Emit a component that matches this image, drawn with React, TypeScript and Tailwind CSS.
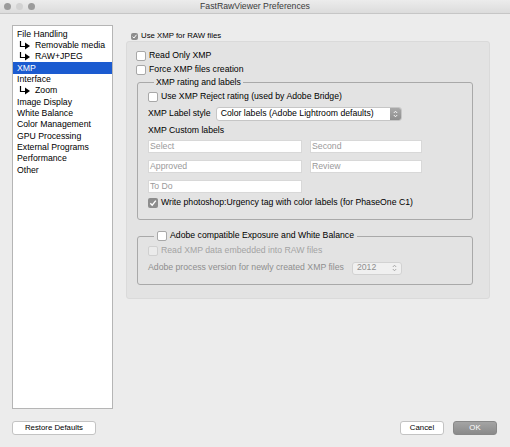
import React from 'react';

const font = { fontFamily: '"Liberation Sans", Arial, sans-serif' };

const NAV = [
  { label: 'File Handling' },
  { label: 'Removable media', sub: true },
  { label: 'RAW+JPEG', sub: true },
  { label: 'XMP', active: true },
  { label: 'Interface' },
  { label: 'Zoom', sub: true },
  { label: 'Image Display' },
  { label: 'White Balance' },
  { label: 'Color Management' },
  { label: 'GPU Processing' },
  { label: 'External Programs' },
  { label: 'Performance' },
  { label: 'Other' },
];

function SubArrow() {
  return (
    <svg width="13" height="9" viewBox="0 0 13 9" className="shrink-0">
      <path d="M1.5 0 V5.5 H6" stroke="#000" strokeWidth="1.2" fill="none" />
      <path d="M6 1.5 L11 5 L6 8.5 Z" fill="#000" />
    </svg>
  );
}

function Check({ checked, disabled, small }: { checked?: boolean; disabled?: boolean; small?: boolean }) {
  const size = small ? 'w-[7px] h-[7px]' : 'w-[10px] h-[10px]';
  if (checked) {
    return (
      <span className={`${size} shrink-0 rounded-[2px] bg-[#8d8d8d] flex items-center justify-center`}>
        <svg viewBox="0 0 10 10" className="w-full h-full">
          <path d="M2.3 5.2 L4.2 7.2 L7.8 2.6" stroke="#fff" strokeWidth="1.4" fill="none" />
        </svg>
      </span>
    );
  }
  return (
    <span
      className={`${size} shrink-0 rounded-[2px] border ${
        disabled ? 'border-[#d0d0d0] bg-[#ebebeb]' : 'border-[#a8a8a8] bg-white'
      }`}
    />
  );
}

function CheckRow({ label, checked, disabled }: { label: string; checked?: boolean; disabled?: boolean }) {
  return (
    <div className="flex items-center gap-[3px] h-[14px]">
      <Check checked={checked} disabled={disabled} />
      <span className={`text-[8.7px] ${disabled ? 'text-[#a4a4a4]' : 'text-black'}`}>{label}</span>
    </div>
  );
}

function Field({ placeholder, w }: { placeholder: string; w: string }) {
  return (
    <div className={`${w} h-[13px] bg-white border border-[#d8d8d8] flex items-center px-[1px] text-[8.7px] text-[#9a9a9a]`}>
      {placeholder}
    </div>
  );
}

function Stepper({ light }: { light?: boolean }) {
  return (
    <svg width="5" height="8" viewBox="0 0 5 8">
      <path d="M0.8 3 L2.5 1.2 L4.2 3 M0.8 5 L2.5 6.8 L4.2 5" stroke={light ? '#fff' : '#a0a0a0'} strokeWidth="0.9" fill="none" />
    </svg>
  );
}

export default function App() {
  return (
    <div style={font} className="w-[510px] h-[447px] bg-[#ececec] flex flex-col overflow-hidden select-none">
      {/* title bar */}
      <div className="h-[14px] shrink-0 relative flex items-center justify-center bg-gradient-to-b from-[#ececec] to-[#dcdcdc] border-b border-[#c6c6c6]">
        <div className="absolute left-[4px] top-[3px] flex gap-[5px]">
          <span className="w-[7px] h-[7px] rounded-full bg-[#9b9b9b]" />
          <span className="w-[7px] h-[7px] rounded-full bg-[#d2d2d2]" />
          <span className="w-[7px] h-[7px] rounded-full bg-[#9b9b9b]" />
        </div>
        <span className="text-[8.7px] text-[#3a3a3a]">FastRawViewer Preferences</span>
      </div>

      <div className="flex-1 flex flex-col px-[12px] pt-[11px]">
        <div className="flex gap-[13px]">
          {/* sidebar */}
          <div className="w-[101px] h-[384px] shrink-0 bg-white border border-[#b5b5b5] pt-[2.5px]">
            {NAV.map((n) => (
              <div
                key={n.label}
                className={`h-[11.33px] flex items-center text-[8.7px] leading-none pl-[4px] ${
                  n.active ? 'bg-[#1b5bd0] text-white' : 'text-black'
                }`}
              >
                {n.sub && (
                  <span className="pl-[2px] pr-[3px]">
                    <SubArrow />
                  </span>
                )}
                {n.label}
              </div>
            ))}
          </div>

          {/* main */}
          <div className="flex-1 flex flex-col pr-[8px]">
            <div className="h-[10px] mt-[6px] flex items-center gap-[3px] pl-[5px]">
              <Check checked small />
              <span className="text-[7.8px] text-black">Use XMP for RAW files</span>
            </div>

            <div className="h-[258px] bg-[#e3e3e3] border border-[#dadada] rounded-[3px] pl-[9px] pr-[16px] pt-[7px]">
              <CheckRow label="Read Only XMP" />
              <CheckRow label="Force XMP files creation" />

              <fieldset className="ml-[1px] h-[143px] border border-[#a9a9a9] rounded-[3px] pl-[10px] pr-[10px]">
                <legend className="ml-[6px] px-[2px] text-[8.7px] leading-[10px] text-black">XMP rating and labels</legend>
                <div className="mt-[3px]">
                  <CheckRow label="Use XMP Reject rating (used by Adobe Bridge)" />
                </div>
                <div className="flex items-center gap-[5px] h-[17px] mt-[1px]">
                  <span className="text-[8.7px] text-black">XMP Label style</span>
                  <div className="w-[186px] h-[14px] bg-white border border-[#c6c6c6] rounded-[3px] flex items-center justify-between pl-[4px] overflow-hidden">
                    <span className="text-[8.7px] text-black">Color labels (Adobe Lightroom defaults)</span>
                    <span className="w-[11px] h-full bg-gradient-to-b from-[#a9a9a9] to-[#8e8e8e] flex items-center justify-center">
                      <Stepper light />
                    </span>
                  </div>
                </div>
                <div className="text-[8.7px] text-black h-[17px] flex items-center">XMP Custom labels</div>
                <div className="flex flex-col gap-[7px] mt-[1px]">
                  <div className="flex gap-[8px]">
                    <Field placeholder="Select" w="w-[154px]" />
                    <Field placeholder="Second" w="w-[112px]" />
                  </div>
                  <div className="flex gap-[8px]">
                    <Field placeholder="Approved" w="w-[154px]" />
                    <Field placeholder="Review" w="w-[112px]" />
                  </div>
                  <div className="flex gap-[8px]">
                    <Field placeholder="To Do" w="w-[154px]" />
                  </div>
                </div>
                <div className="mt-[3px]">
                  <CheckRow label="Write photoshop:Urgency tag with color labels (for PhaseOne C1)" checked />
                </div>
              </fieldset>

              <fieldset className="ml-[1px] mt-[10px] h-[55px] border border-[#a9a9a9] rounded-[3px] pl-[10px] pr-[10px]">
                <legend className="ml-[6px] px-[3px] flex items-center gap-[3px] h-[12px]">
                  <Check />
                  <span className="text-[8.7px] text-black">Adobe compatible Exposure and White Balance</span>
                </legend>
                <div className="mt-[2px]">
                  <CheckRow label="Read XMP data embedded into RAW files" disabled />
                </div>
                <div className="flex items-center gap-[8px] h-[16px] mt-[2px]">
                  <span className="text-[8.7px] text-[#8e8e8e]">Adobe process version for newly created XMP files</span>
                  <div className="w-[50px] h-[13px] bg-[#f0f0f0] border border-[#d2d2d2] rounded-[3px] flex items-center justify-between px-[4px]">
                    <span className="text-[8.7px] text-[#8e8e8e]">2012</span>
                    <Stepper />
                  </div>
                </div>
              </fieldset>
            </div>
          </div>
        </div>

        {/* bottom buttons */}
        <div className="flex items-center mt-[12px]">
          <button className="w-[84px] h-[14px] bg-white border border-[#c3c3c3] rounded-[3px] text-[7.8px] text-black flex items-center justify-center">
            Restore Defaults
          </button>
          <div className="flex-1" />
          <button className="w-[44px] h-[14px] bg-white border border-[#c3c3c3] rounded-[3px] text-[7.8px] text-black flex items-center justify-center">
            Cancel
          </button>
          <button className="ml-[9px] mr-[1px] w-[44px] h-[14px] bg-gradient-to-b from-[#a4a4a4] to-[#8a8a8a] border border-[#888] rounded-[3px] text-[7.8px] text-white flex items-center justify-center">
            OK
          </button>
        </div>
      </div>
    </div>
  );
}
